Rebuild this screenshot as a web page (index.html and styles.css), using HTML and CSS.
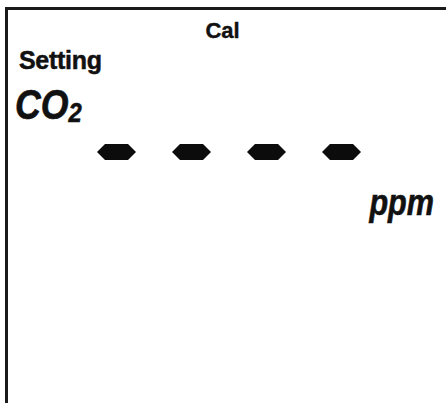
FILE: index.html
```html
<!DOCTYPE html>
<html lang="en">
<head>
  <meta charset="UTF-8" />
  <meta name="viewport" content="width=device-width, initial-scale=1" />
  <title>CO2 Cal Setting</title>
  <link rel="stylesheet" href="styles.css">
</head>
<body>
  <div class="lcd">
    <div class="mode">Cal</div>
    <div class="label">Setting</div>
    <div class="gas"><span class="squeeze">CO<sub>2</sub></span></div>

    <div class="digits">
      <svg class="seg" viewBox="0 0 39 16"><polygon points="0,8 8,0 31,0 39,8 31,16 8,16" /></svg>
      <svg class="seg" viewBox="0 0 39 16"><polygon points="0,8 8,0 31,0 39,8 31,16 8,16" /></svg>
      <svg class="seg" viewBox="0 0 39 16"><polygon points="0,8 8,0 31,0 39,8 31,16 8,16" /></svg>
      <svg class="seg" viewBox="0 0 39 16"><polygon points="0,8 8,0 31,0 39,8 31,16 8,16" /></svg>
    </div>

    <div class="unit"><span class="squeeze right">ppm</span></div>
  </div>
</body>
</html>
```

FILE: styles.css
```css
html, body {
  margin: 0;
  height: 100%;
  overflow: hidden;
  background: #fff;
}
body {
  font-family: "Liberation Sans", Arial, sans-serif;
  color: #111;
}
.lcd {
  margin: 7px 0 0 5px;
  min-height: 100vh;
  border-top: 3px solid #1a1a1a;
  border-left: 3px solid #1a1a1a;
  padding-top: 10px;
}
.mode {
  font-size: 22px;
  line-height: 22px;
  font-weight: bold;
  text-align: center;
  padding-right: 9px;
  -webkit-text-stroke: 0.4px #111;
}
.label {
  margin-top: 6px;
  padding-left: 11px;
  font-size: 25px;
  line-height: 25px;
  font-weight: bold;
  letter-spacing: -0.3px;
  -webkit-text-stroke: 0.5px #111;
}
.gas {
  margin-top: 11px;
  padding-left: 7px;
  font-size: 42px;
  line-height: 42px;
  font-weight: bold;
  font-style: italic;
  -webkit-text-stroke: 0.6px #111;
}
.squeeze {
  display: inline-block;
  transform: scaleX(0.85);
  transform-origin: left center;
}
.squeeze.right {
  transform-origin: right center;
}
.gas sub {
  font-size: 28px;
  vertical-align: -3px;
  line-height: 0;
}
.digits {
  margin-top: 18px;
  padding-left: 89px;
  display: flex;
  gap: 36px;
}
.seg {
  width: 39px;
  height: 16px;
  display: block;
  fill: #0c0c0c;
}
.unit {
  margin-top: 25px;
  margin-right: 12px;
  text-align: right;
  font-size: 36px;
  line-height: 36px;
  font-weight: bold;
  font-style: italic;
  -webkit-text-stroke: 0.6px #111;
}
```
